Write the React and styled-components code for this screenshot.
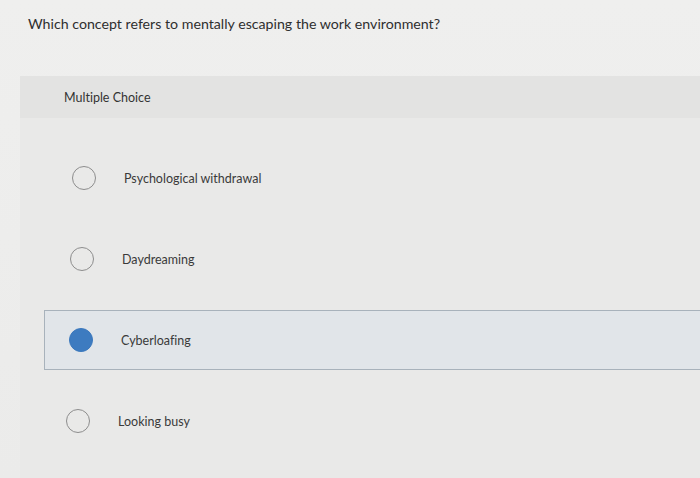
import React from "react";
import styled, { createGlobalStyle } from "styled-components";

const Global = createGlobalStyle`
  html, body { margin: 0; padding: 0; }
  body {
    background: #ececeb;
    font-family: Lato, "Open Sans", "Liberation Sans", sans-serif;
    font-variant-ligatures: none;
    width: 700px;
    height: 478px;
    overflow: hidden;
  }
`;

const Page = styled.div`
  display: flex;
  flex-direction: column;
  height: 478px;
  background: linear-gradient(180deg, #efefee 0%, #ebebea 100%);
`;

const Question = styled.h1`
  margin: 0;
  padding: 15px 0 0 28px;
  height: 76px;
  flex: none;
  box-sizing: border-box;
  font-size: 14.2px;
  font-weight: 400;
  color: #2e2e2e;
`;

const Panel = styled.section`
  margin-left: 20px;
  flex: 1;
  display: flex;
  flex-direction: column;
  background: #e9e9e8;
`;

const PanelHeader = styled.div`
  height: 42px;
  display: flex;
  align-items: center;
  padding-left: 44px;
  background: #e3e3e2;
  font-size: 12.5px;
  color: #333;
`;

const Options = styled.ul`
  list-style: none;
  margin: 0;
  padding: 30px 0 0 24px;
  display: flex;
  flex-direction: column;
  gap: 21px;
`;

const Option = styled.li`
  height: 60px;
  box-sizing: border-box;
  display: flex;
  align-items: center;
  gap: 28px;
  padding-left: ${(p) => 25 - p.$shift}px;
  border: 1px solid ${(p) => (p.$selected ? "#a8b2bb" : "transparent")};
  border-right: none;
  background: ${(p) => (p.$selected ? "#e1e5e9" : "transparent")};
  font-size: 12.5px;
  color: #3a3a3a;
`;

const Radio = styled.span`
  width: 24px;
  height: 24px;
  box-sizing: border-box;
  border-radius: 50%;
  border: 1.5px solid ${(p) => (p.$selected ? "#3b78bd" : "#8d8d8d")};
  background: ${(p) => (p.$selected ? "#3d7bc0" : "transparent")};
  flex: none;
`;

const options = [
  { label: "Psychological withdrawal", shift: -2 },
  { label: "Daydreaming", shift: 0 },
  { label: "Cyberloafing", shift: 1, selected: true },
  { label: "Looking busy", shift: 4 },
];

export default function App() {
  return (
    <>
      <Global />
      <Page>
        <Question>Which concept refers to mentally escaping the work environment?</Question>
        <Panel>
          <PanelHeader>Multiple Choice</PanelHeader>
          <Options>
            {options.map((o) => (
              <Option key={o.label} $selected={o.selected} $shift={o.shift}>
                <Radio $selected={o.selected} />
                {o.label}
              </Option>
            ))}
          </Options>
        </Panel>
      </Page>
    </>
  );
}
